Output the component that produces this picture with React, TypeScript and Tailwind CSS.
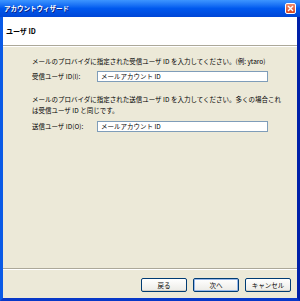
import React from "react";

const font = { fontFamily: '"Noto Sans CJK JP", "Noto Sans", sans-serif' };

const XpButton = ({ label, primary }: { label: string; primary?: boolean }) => (
  <button
    className={
      "h-[14px] w-[46px] rounded-[2px] border border-[#003c74] bg-gradient-to-b from-[#ffffff] to-[#ecebe6] text-[6.5px] leading-none text-black " +
      (primary ? "shadow-[inset_0_0_0_1px_#98b8ea]" : "shadow-[inset_0_-1px_0_#d6d0c5]")
    }
  >
    {label}
  </button>
);

const Row = ({ label }: { label: string }) => (
  <div className="flex items-center">
    <span className="w-[65px] text-[6.5px] leading-[11px] text-black">{label}</span>
    <div className="flex h-[11px] w-[171px] items-center border border-[#7f9db9] bg-white pl-[3px] text-[6.5px] text-black">
      メールアカウント ID
    </div>
  </div>
);

export default function App() {
  return (
    <div className="flex h-[301px] w-[300px] flex-col overflow-hidden bg-[#0054e3]" style={font}>
      {/* title bar */}
      <div className="relative flex h-[17px] items-center bg-gradient-to-b from-[#3d95ff] via-[#0058ee] to-[#0046d6] pl-[4px]">
        <span className="text-[6.5px] font-bold leading-none text-white [text-shadow:1px_1px_0_#0f1d7a]">
          アカウントウィザード
        </span>
        <div className="absolute right-[4px] top-[3px] flex h-[11px] w-[11px] items-center justify-center rounded-[2px] border border-white bg-gradient-to-b from-[#f08a6c] to-[#d7431c]">
          <svg width="7" height="7" viewBox="0 0 7 7">
            <path d="M1 1 L6 6 M6 1 L1 6" stroke="white" strokeWidth="1.4" />
          </svg>
        </div>
      </div>

      {/* body */}
      <div className="flex flex-1 flex-col border-b-[3px] border-l-[3px] border-r-[3px] border-b-[#0838c8] border-l-[#0a5ae6] border-r-[#0020a8] bg-[#ece9d8]">
        <div className="flex h-[29px] items-center border-b border-[#aca899] bg-white pl-[3px]">
          <span className="text-[7px] font-bold leading-none text-black">ユーザ ID</span>
        </div>
        <div className="h-px bg-white" />

        <div className="flex flex-col pl-[29px] pt-[9px]">
          <p className="text-[6.5px] leading-[11px] text-black">
            メールのプロバイダに指定された受信ユーザ ID を入力してください。(例: ytaro)
          </p>
          <div className="mt-[4px]">
            <Row label="受信ユーザ ID(I):" />
          </div>
          <p className="mt-[12px] w-[253px] text-[6.5px] leading-[11px] text-black">
            メールのプロバイダに指定された送信ユーザ ID を入力してください。多くの場合これは受信ユーザ ID と同じです。
          </p>
          <div className="mt-[5px]">
            <Row label="送信ユーザ ID(O):" />
          </div>
        </div>

        <div className="flex-1" />
        <div className="h-px bg-[#aca899]" />
        <div className="h-px bg-white" />
        <div className="flex justify-end gap-[6px] pb-[6px] pr-[6px] pt-[8px]">
          <XpButton label="戻る" />
          <XpButton label="次へ" primary />
          <XpButton label="キャンセル" />
        </div>
      </div>
    </div>
  );
}
